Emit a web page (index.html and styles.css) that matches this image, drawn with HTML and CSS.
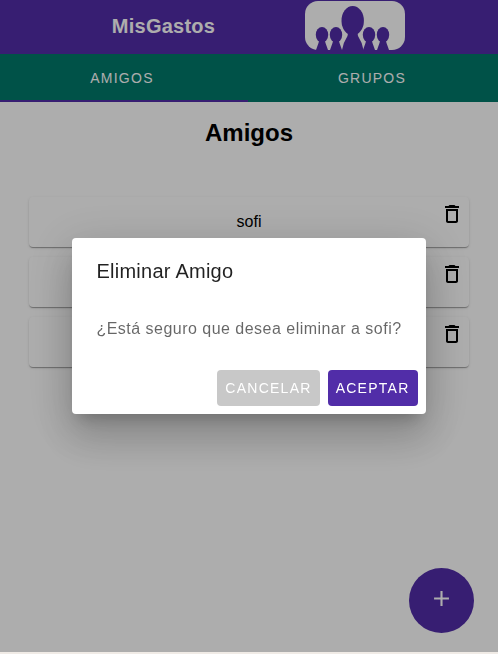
FILE: index.html
```html
<!DOCTYPE html>
<html lang="es">
<head>
<meta charset="utf-8">
<meta name="viewport" content="width=device-width, initial-scale=1">
<title>MisGastos</title>
<link rel="stylesheet" href="styles.css">
</head>
<body>
<svg class="sprite" aria-hidden="true">
  <symbol id="trash" viewBox="0 0 24 24">
    <path d="M6 19c0 1.100.900 2 2 2h8c1.100 0 2-.900 2-2V7H6v12zM8 9h8v10H8V9zm7.500-5l-1-1h-5l-1 1H5v2h14V4h-3.500z"/>
  </symbol>
</svg>
<div class="app">
  <header class="toolbar">
    <span class="brand">MisGastos</span>
    <svg class="logo" viewBox="0 0 100 49" role="img" aria-label="Grupo de personas">
      <rect class="logo-plate" width="100" height="49" rx="13"/>
      <g class="logo-people">
        <ellipse cx="47.700" cy="19.700" rx="11.200" ry="14.700"/>
        <path d="M43 32h9.500l.5 3Q57 41 58.500 49H37Q38.500 41 42.500 35z"/>
        <ellipse cx="17" cy="33.700" rx="6.200" ry="7.700"/>
        <path d="M14 40h6l.5 2 2.500 7h-12l2.500-7z"/>
        <ellipse cx="31" cy="33.700" rx="6.200" ry="7.700"/>
        <path d="M28 40h6l.5 2 2.500 7h-12l2.500-7z"/>
        <ellipse cx="64" cy="33.700" rx="6.200" ry="7.700"/>
        <path d="M61 40h6l.5 2 2.500 7h-12l2.500-7z"/>
        <ellipse cx="78" cy="33.700" rx="6.200" ry="7.700"/>
        <path d="M75 40h6l.5 2 2.500 7h-12l2.500-7z"/>
      </g>
    </svg>
  </header>
  <nav class="tabs">
    <button class="tab tab-active" type="button">AMIGOS</button>
    <button class="tab" type="button">GRUPOS</button>
  </nav>
  <main class="content">
    <h1 class="heading">Amigos</h1>
    <ul class="friends">
      <li class="friend"><span class="friend-name">sofi</span><button class="delete" type="button" aria-label="Eliminar"><svg class="icon"><use href="#trash"/></svg></button></li>
      <li class="friend"><span class="friend-name"></span><button class="delete" type="button" aria-label="Eliminar"><svg class="icon"><use href="#trash"/></svg></button></li>
      <li class="friend"><span class="friend-name"></span><button class="delete" type="button" aria-label="Eliminar"><svg class="icon"><use href="#trash"/></svg></button></li>
    </ul>
  </main>
  <button class="fab" type="button" aria-label="Agregar amigo"><svg class="plus" viewBox="0 0 16 16"><path d="M7 1h2v6h6v2H9v6H7V9H1V7h6z"/></svg></button>
</div>
<div class="scrim">
  <section class="dialog" role="alertdialog" aria-modal="true" aria-labelledby="dialog-title" aria-describedby="dialog-text">
    <h2 class="dialog-title" id="dialog-title">Eliminar Amigo</h2>
    <p class="dialog-text" id="dialog-text">¿Está seguro que desea eliminar a sofi?</p>
    <div class="dialog-actions">
      <button class="button button-muted" type="button">CANCELAR</button>
      <button class="button" type="button">ACEPTAR</button>
    </div>
  </section>
</div>
</body>
</html>
```
FILE: styles.css
```css
:root {
  --primary: #512da8;
  --secondary: #00796b;
}

* {
  box-sizing: border-box;
}

body {
  margin: 0;
  background: #f0ebe6;
  color: #000;
  font-family: "Liberation Sans", Arial, sans-serif;
  font-size: 16px;
}

button {
  margin: 0;
  padding: 0;
  border: 0;
  background: none;
  font-family: inherit;
  cursor: pointer;
}

.sprite {
  display: none;
}

.app {
  min-height: calc(100vh - 2px);
  background: #fff;
}

.toolbar {
  display: flex;
  align-items: flex-start;
  justify-content: center;
  gap: 90px;
  height: 54px;
  padding: 1px 0 0 19px;
  background: var(--primary);
  color: #fff;
}

.brand {
  font-size: 20px;
  font-weight: 700;
  line-height: 51px;
  letter-spacing: 0.0125em;
}

.logo {
  width: 100px;
  height: 49px;
}

.logo-plate {
  fill: #fff;
}

.logo-people {
  fill: var(--primary);
}

.tabs {
  display: grid;
  grid-template-columns: 1fr 1fr;
  height: 48px;
  padding-right: 2px;
  background: var(--secondary);
}

.tab {
  border-top: 2px solid transparent;
  border-bottom: 2px solid transparent;
  color: #fff;
  font-size: 14px;
  font-weight: 500;
  letter-spacing: 0.09em;
}

.tab-active {
  padding-right: 4px;
  border-bottom-color: var(--primary);
}

.content {
  padding: 16px 29px;
}

.heading {
  margin: 0;
  font-size: 24px;
  line-height: 30px;
  text-align: center;
}

.friends {
  display: grid;
  gap: 10px;
  margin: 49px 0 0;
  padding: 0;
  list-style: none;
}

.friend {
  display: grid;
  grid-template-columns: 34px 1fr 34px;
  height: 50px;
  border-radius: 4px;
  box-shadow: 0 2px 1px -1px rgba(0, 0, 0, 0.2), 0 1px 1px rgba(0, 0, 0, 0.14), 0 1px 3px rgba(0, 0, 0, 0.12);
}

.friend-name {
  grid-column: 2;
  line-height: 50px;
  text-align: center;
}

.delete {
  align-self: start;
  height: 34px;
}

.icon {
  display: block;
  width: 24px;
  height: 24px;
  margin: 0 auto;
}

.fab {
  position: fixed;
  right: 24px;
  bottom: 21px;
  display: flex;
  align-items: center;
  justify-content: center;
  width: 65px;
  height: 65px;
  padding-bottom: 4px;
  border-radius: 50%;
  background: var(--primary);
}

.plus {
  width: 17px;
  height: 17px;
  fill: #fff;
}

.scrim {
  position: fixed;
  inset: 0 0 2px;
  display: flex;
  align-items: center;
  justify-content: center;
  background: rgba(0, 0, 0, 0.32);
}

.dialog {
  border-radius: 4px;
  background: #fff;
  box-shadow: 0 11px 15px -7px rgba(0, 0, 0, 0.2), 0 24px 38px 3px rgba(0, 0, 0, 0.14), 0 9px 46px 8px rgba(0, 0, 0, 0.12);
}

.dialog-title {
  margin: 0;
  padding: 17px 24px 9px;
  color: rgba(0, 0, 0, 0.87);
  font-size: 20px;
  font-weight: 500;
  line-height: 32px;
  letter-spacing: 0.0125em;
}

.dialog-text {
  margin: 0;
  padding: 21px 24px;
  color: rgba(0, 0, 0, 0.6);
  line-height: 24px;
  letter-spacing: 0.03em;
}

.dialog-actions {
  display: flex;
  justify-content: flex-end;
  gap: 8px;
  padding: 8px;
}

.button {
  height: 36px;
  padding: 0 8px;
  border-radius: 4px;
  background: var(--primary);
  color: #fff;
  font-size: 14px;
  font-weight: 500;
  letter-spacing: 0.09em;
}

.button-muted {
  background: #c8c8c8;
}
```
